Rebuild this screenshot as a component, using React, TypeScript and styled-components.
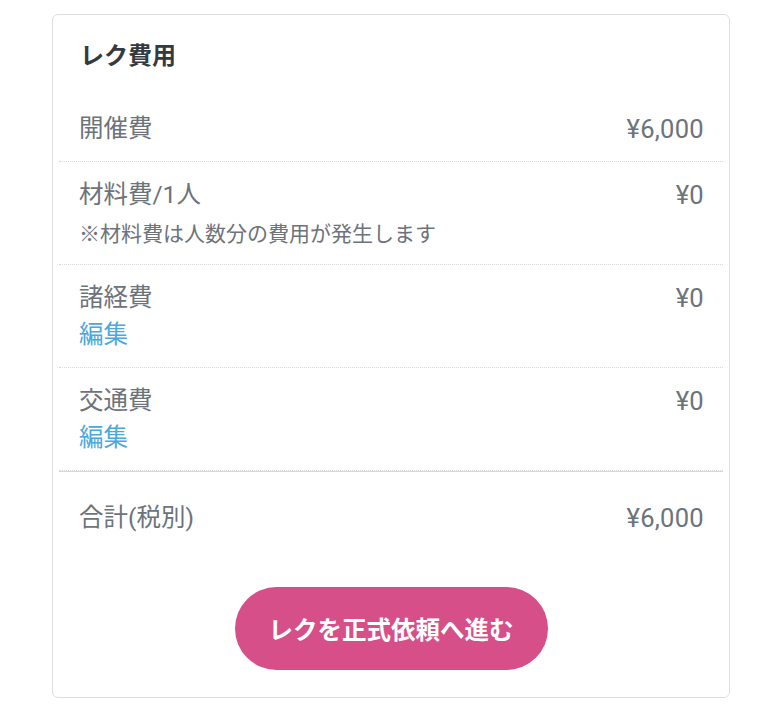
import styled, { createGlobalStyle } from "styled-components";

const GlobalStyles = createGlobalStyle`
  body {
    margin: 0;
    background: #ffffff;
    font-family: Roboto, "Noto Sans CJK JP", sans-serif;
  }
`;

const Page = styled.div`
  padding: 14px 0 0 52px;
`;

const Card = styled.section`
  width: 678px;
  box-sizing: border-box;
  border: 1px solid #dcdfe2;
  border-radius: 6px;
  padding: 23px 6px 27px;
  background: #fff;
`;

const Title = styled.h2`
  margin: 0 0 22px;
  padding-left: 21px;
  font-size: 24px;
  line-height: 36px;
  font-weight: 700;
  color: #343a40;
`;

const Row = styled.div<{ $total?: boolean }>`
  display: flex;
  justify-content: space-between;
  align-items: flex-start;
  padding: ${(p) => (p.$total ? "28px 19px 0 20px" : "15px 19px 14px 20px")};
  border-bottom: ${(p) => (p.$total ? "none" : "1px dotted #d6d9dc")};
  border-top: ${(p) => (p.$total ? "1px solid #d6d9dc" : "none")};
`;

const LabelCol = styled.div`
  display: flex;
  flex-direction: column;
`;

const Label = styled.span`
  font-size: 24.5px;
  line-height: 36px;
  color: #6c737a;
`;

const Note = styled.span`
  margin-top: 5px;
  font-size: 21px;
  line-height: 32px;
  color: #6c737a;
`;

const EditLink = styled.a`
  margin-top: 1px;
  font-size: 24.5px;
  line-height: 36px;
  color: #4ba8da;
  text-decoration: none;
  cursor: pointer;
`;

const Amount = styled.span`
  font-size: 25.5px;
  line-height: 36px;
  letter-spacing: 0.3px;
  color: #6c737a;
`;

const Actions = styled.div`
  display: flex;
  justify-content: center;
  margin-top: 51px;
`;

const SubmitButton = styled.button`
  width: 313px;
  height: 83px;
  border: none;
  border-radius: 42px;
  background: #d64f89;
  color: #fff;
  font-family: Roboto, "Noto Sans CJK JP", sans-serif;
  font-size: 24.5px;
  font-weight: 700;
  cursor: pointer;
`;

type Fee = { label: string; amount: string; note?: string; editable?: boolean };

const fees: Fee[] = [
  { label: "開催費", amount: "¥6,000" },
  { label: "材料費/1人", amount: "¥0", note: "※材料費は人数分の費用が発生します" },
  { label: "諸経費", amount: "¥0", editable: true },
  { label: "交通費", amount: "¥0", editable: true },
];

const App = () => {
  return (
    <Page>
      <GlobalStyles />
      <Card>
        <Title>レク費用</Title>
        {fees.map((fee) => (
          <Row key={fee.label}>
            <LabelCol>
              <Label>{fee.label}</Label>
              {fee.note && <Note>{fee.note}</Note>}
              {fee.editable && <EditLink>編集</EditLink>}
            </LabelCol>
            <Amount>{fee.amount}</Amount>
          </Row>
        ))}
        <Row $total>
          <Label>合計(税別)</Label>
          <Amount>¥6,000</Amount>
        </Row>
        <Actions>
          <SubmitButton>レクを正式依頼へ進む</SubmitButton>
        </Actions>
      </Card>
    </Page>
  );
};

export default App;
